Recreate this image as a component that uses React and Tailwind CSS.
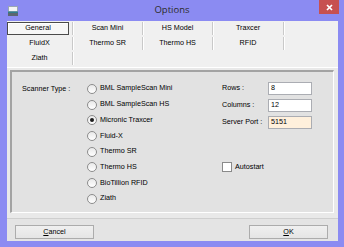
import React from "react";

const tabs = [
  ["General", "Scan Mini", "HS Model", "Traxcer", ""],
  ["FluidX", "Thermo SR", "Thermo HS", "RFID", ""],
  ["Ziath", "", "", "", ""],
];

const scanners = [
  "BML SampleScan Mini",
  "BML SampleScan HS",
  "Micronic Traxcer",
  "Fluid-X",
  "Thermo SR",
  "Thermo HS",
  "BioTillion RFID",
  "Ziath",
];

function Radio({ checked, label }) {
  return (
    <div className="flex items-center h-[15.7px]">
      <span className="w-[10px] h-[10px] rounded-full border border-[#8c8c8c] bg-gradient-to-b from-[#e9e9e9] to-white flex items-center justify-center">
        {checked && <span className="w-[4px] h-[4px] rounded-full bg-[#1c1c1c]" />}
      </span>
      <span className="ml-[3px] text-black">{label}</span>
    </div>
  );
}

function Field({ label, value, tint }) {
  return (
    <div className="flex items-center h-[13px]">
      <span className="w-[46px] text-black">{label}</span>
      <div
        className={
          "w-[44px] h-[13px] border border-[#abadb3] pl-[2px] flex items-center text-black " +
          (tint ? "bg-[#fff0dc]" : "bg-white")
        }
      >
        {value}
      </div>
    </div>
  );
}

export default function App() {
  const cols = ["w-[66px]", "w-[70px]", "w-[70px]", "w-[71px]", "flex-1"];

  return (
    <div
      className="w-[344px] h-[247px] bg-[#8b8bf2] flex flex-col pl-[7px] pr-[6px] pb-[6px]"
      style={{ fontFamily: '"Liberation Sans", Arial, sans-serif' }}
    >
      {/* title bar */}
      <div className="h-[21px] -ml-[7px] -mr-[6px] grid grid-cols-[1fr_auto_1fr] items-start">
        <div className="pl-[8px] pt-[6px]">
          <svg width="10" height="10" viewBox="0 0 10 10">
            <rect x="0.5" y="0.5" width="9" height="5" fill="#f4f4f4" stroke="#9aa6b4" />
            <rect x="0" y="5.5" width="10" height="1.5" fill="#2f7d8c" />
            <rect x="0" y="7" width="10" height="3" fill="#5b6670" />
          </svg>
        </div>
        <div
          className="pt-[3px] text-[9.5px] text-[#2b2b2b]"
          style={{ fontFamily: '"Open Sans", "Noto Sans", sans-serif' }}
        >
          Options
        </div>
        <div className="flex justify-end pr-[5px]">
          <div className="w-[20px] h-[14px] bg-[#c75050] flex items-center justify-center">
            <svg width="7" height="7" viewBox="0 0 7 7">
              <path d="M1 1L6 6M6 1L1 6" stroke="white" strokeWidth="1.7" />
            </svg>
          </div>
        </div>
      </div>

      {/* client */}
      <div className="flex-1 flex flex-col bg-[#f0f0f0] text-[7.2px]">
        {/* tab buttons */}
        <div className="h-[46px] pt-[1px] flex flex-col gap-[2px]">
          {tabs.map((row, r) => (
            <div key={r} className="flex h-[13px]">
              {row.map((t, c) => {
                const sep = t !== "" || (r < 2 && c < 4);
                const sel = r === 0 && c === 0;
                return (
                  <div
                    key={c}
                    className={
                      cols[c] +
                      " h-full flex items-center " +
                      (sep && c < 4 ? "border-r border-[#c9c9c9] shadow-[1px_0_0_#ffffff]" : "")
                    }
                  >
                    {sel ? (
                      <div className="w-[62px] h-full border border-[#4a4a4a] bg-[#f6f6f6] shadow-[inset_1px_1px_0_#ffffff] flex items-center justify-center text-black">
                        {t}
                      </div>
                    ) : (
                      <div className="w-full text-center text-black">{t}</div>
                    )}
                  </div>
                );
              })}
            </div>
          ))}
        </div>

        {/* tab page */}
        <div className="h-[151px] bg-[#e9e9e9] border-t border-white pt-[2px] pl-[3px] pr-[4px] pb-[5px]">
          <div className="h-full bg-[#e2e2e2] border-t-2 border-l-2 border-[#a3a3a3] border-r border-b border-r-white border-b-white flex">
            <div className="w-[75px] pl-[10px] pt-[12px] text-black">Scanner Type :</div>
            <div className="w-[135px] pt-[9px] flex flex-col">
              {scanners.map((s, i) => (
                <Radio key={s} label={s} checked={i === 2} />
              ))}
            </div>
            <div className="pt-[10px] flex flex-col gap-[4px]">
              <Field label="Rows :" value="8" />
              <Field label="Columns :" value="12" />
              <Field label="Server Port :" value="5151" tint />
              <div className="mt-[29px] flex items-center">
                <span className="w-[10px] h-[10px] border border-[#8a8a8a] bg-white" />
                <span className="ml-[3px] text-black">Autostart</span>
              </div>
            </div>
          </div>
        </div>

        {/* button bar */}
        <div className="flex-1 bg-[#e4e4e4] border-t border-[#cfcfcf] pt-[6px] pl-[8px] pr-[10px] flex justify-between items-start">
          <div className="w-[79px] h-[14px] border border-[#acacac] bg-gradient-to-b from-[#f0f0f0] to-[#e5e5e5] flex items-center justify-center text-black">
            <span><u>C</u>ancel</span>
          </div>
          <div className="w-[79px] h-[14px] border border-[#acacac] bg-gradient-to-b from-[#f0f0f0] to-[#e5e5e5] flex items-center justify-center text-black">
            <span><u>O</u>K</span>
          </div>
        </div>
      </div>
    </div>
  );
}
